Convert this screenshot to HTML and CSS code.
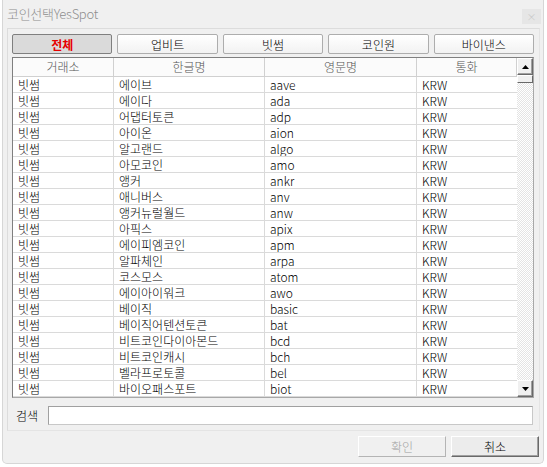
FILE: index.html
```html
<!DOCTYPE html>
<html lang="ko">
<head>
<meta charset="utf-8">
<link rel="stylesheet" href="styles.css">
</head>
<body>
<div class="window">
  <div class="titlebar">
    <span class="title">코인선택YesSpot</span>
    <span class="close">×</span>
  </div>
  <div class="panel">
    <div class="tabs">
      <button class="tab active">전체</button>
      <button class="tab">업비트</button>
      <button class="tab">빗썸</button>
      <button class="tab">코인원</button>
      <button class="tab">바이낸스</button>
    </div>
    <div class="list">
      <div class="list-body">
        <div class="row head">
          <div class="c c1">거래소</div><div class="c c2">한글명</div><div class="c c3">영문명</div><div class="c c4">통화</div>
        </div>
        <div class="row"><div class="c c1">빗썸</div><div class="c c2">에이브</div><div class="c c3">aave</div><div class="c c4">KRW</div></div>
        <div class="row"><div class="c c1">빗썸</div><div class="c c2">에이다</div><div class="c c3">ada</div><div class="c c4">KRW</div></div>
        <div class="row"><div class="c c1">빗썸</div><div class="c c2">어댑터토큰</div><div class="c c3">adp</div><div class="c c4">KRW</div></div>
        <div class="row"><div class="c c1">빗썸</div><div class="c c2">아이온</div><div class="c c3">aion</div><div class="c c4">KRW</div></div>
        <div class="row"><div class="c c1">빗썸</div><div class="c c2">알고랜드</div><div class="c c3">algo</div><div class="c c4">KRW</div></div>
        <div class="row"><div class="c c1">빗썸</div><div class="c c2">아모코인</div><div class="c c3">amo</div><div class="c c4">KRW</div></div>
        <div class="row"><div class="c c1">빗썸</div><div class="c c2">앵커</div><div class="c c3">ankr</div><div class="c c4">KRW</div></div>
        <div class="row"><div class="c c1">빗썸</div><div class="c c2">애니버스</div><div class="c c3">anv</div><div class="c c4">KRW</div></div>
        <div class="row"><div class="c c1">빗썸</div><div class="c c2">앵커뉴럴월드</div><div class="c c3">anw</div><div class="c c4">KRW</div></div>
        <div class="row"><div class="c c1">빗썸</div><div class="c c2">아픽스</div><div class="c c3">apix</div><div class="c c4">KRW</div></div>
        <div class="row"><div class="c c1">빗썸</div><div class="c c2">에이피엠코인</div><div class="c c3">apm</div><div class="c c4">KRW</div></div>
        <div class="row"><div class="c c1">빗썸</div><div class="c c2">알파체인</div><div class="c c3">arpa</div><div class="c c4">KRW</div></div>
        <div class="row"><div class="c c1">빗썸</div><div class="c c2">코스모스</div><div class="c c3">atom</div><div class="c c4">KRW</div></div>
        <div class="row"><div class="c c1">빗썸</div><div class="c c2">에이아이워크</div><div class="c c3">awo</div><div class="c c4">KRW</div></div>
        <div class="row"><div class="c c1">빗썸</div><div class="c c2">베이직</div><div class="c c3">basic</div><div class="c c4">KRW</div></div>
        <div class="row"><div class="c c1">빗썸</div><div class="c c2">베이직어텐션토큰</div><div class="c c3">bat</div><div class="c c4">KRW</div></div>
        <div class="row"><div class="c c1">빗썸</div><div class="c c2">비트코인다이아몬드</div><div class="c c3">bcd</div><div class="c c4">KRW</div></div>
        <div class="row"><div class="c c1">빗썸</div><div class="c c2">비트코인캐시</div><div class="c c3">bch</div><div class="c c4">KRW</div></div>
        <div class="row"><div class="c c1">빗썸</div><div class="c c2">벨라프로토콜</div><div class="c c3">bel</div><div class="c c4">KRW</div></div>
        <div class="row"><div class="c c1">빗썸</div><div class="c c2">바이오패스포트</div><div class="c c3">biot</div><div class="c c4">KRW</div></div>
      </div>
      <div class="scrollbar">
        <div class="sb-btn"><svg width="7" height="4" viewBox="0 0 7 4"><path d="M3.5 0L7 4H0z" fill="#000"/></svg></div>
        <div class="sb-thumb"></div>
        <div class="sb-track"></div>
        <div class="sb-btn"><svg width="7" height="4" viewBox="0 0 7 4"><path d="M0 0H7L3.5 4z" fill="#000"/></svg></div>
      </div>
    </div>
    <div class="search">
      <span class="search-label">검색</span>
      <div class="search-input"></div>
    </div>
  </div>
  <div class="footer">
    <button class="btn disabled">확인</button>
    <button class="btn">취소</button>
  </div>
</div>
</body>
</html>
```

FILE: styles.css
```css
html, body {
  margin: 0;
  padding: 0;
  background: #ffffff;
}
body {
  width: 547px;
  height: 467px;
  font-family: "Noto Sans CJK KR", "Noto Sans", sans-serif;
  font-size: 12px;
  font-weight: 300;
  color: #000;
}
.window {
  margin-left: 2px;
  width: 542px;
  height: 464px;
  box-sizing: border-box;
  border: 1px solid #d6d6d6;
  border-top: none;
  border-radius: 0 0 5px 5px;
  background: #f0f0f0;
  display: flex;
  flex-direction: column;
}
.titlebar {
  height: 28px;
  display: flex;
  align-items: center;
  justify-content: space-between;
  padding: 0 2px 2px 4px;
  box-sizing: border-box;
}
.title {
  color: #8e8e8e;
  font-size: 13px;
  letter-spacing: -0.3px;
}
.close {
  width: 19px;
  height: 15px;
  background: #e6e6e6;
  color: #c4c4c4;
  font-size: 10px;
  line-height: 15px;
  text-align: center;
  margin-top: 6px;
}
.panel {
  margin-left: 4px;
  width: 533px;
  height: 403px;
  box-sizing: border-box;
  border: 1px solid #dcdcdc;
  border-right-color: #e4e4e4;
  border-bottom-color: #e4e4e4;
  padding: 5px 5px 0 4px;
  display: flex;
  flex-direction: column;
}
.tabs {
  display: flex;
  gap: 5px;
  height: 20px;
}
.tab {
  flex: 1;
  margin: 0;
  padding: 0;
  height: 20px;
  box-sizing: border-box;
  border: 1px solid #adadad;
  border-radius: 2px;
  background: linear-gradient(#ffffff, #f2f2f2);
  font-family: inherit;
  font-size: 12px;
  font-weight: 300;
  color: #000;
  line-height: 17px;
}
.tab.active {
  background: #dadada;
  border-color: #7f7f7f;
  color: #e60000;
  font-weight: bold;
}
.list {
  margin-top: 3px;
  width: 522px;
  height: 341px;
  box-sizing: border-box;
  border: 1px solid #7f7f7f;
  border-right-color: #a8a8a8;
  border-bottom-color: #a8a8a8;
  background: #fff;
  display: flex;
}
.list-body {
  width: 504px;
  display: flex;
  flex-direction: column;
}
.row {
  display: flex;
  height: 16px;
  box-sizing: border-box;
  border-bottom: 1px solid #dadada;
}
.row.head {
  height: 19px;
  background: #fbfbfb;
  border-bottom: 1px solid #d0d0d0;
  color: #555;
}
.c {
  box-sizing: border-box;
  border-right: 1px solid #dadada;
  padding-left: 5px;
  line-height: 15px;
  white-space: nowrap;
  overflow: hidden;
}
.head .c {
  text-align: center;
  padding-left: 0;
  line-height: 18px;
  border-right-color: #d0d0d0;
}
.c1 { width: 101px; }
.c2 { width: 151px; }
.c3 { width: 152px; }
.c4 { width: 100px; border-right: none; }
.head .c4 { border-right: 1px solid #d0d0d0; }
.scrollbar {
  width: 16px;
  display: flex;
  flex-direction: column;
}
.sb-btn {
  height: 17px;
  box-sizing: border-box;
  background: #f0f0f0;
  border: 1px solid;
  border-color: #ffffff #696969 #696969 #ffffff;
  box-shadow: inset -1px -1px 0 #a0a0a0;
  display: flex;
  align-items: center;
  justify-content: center;
}
.sb-thumb {
  height: 8px;
  box-sizing: border-box;
  background: #f0f0f0;
  border: 1px solid;
  border-color: #ffffff #696969 #696969 #ffffff;
}
.sb-track {
  flex: 1;
  background-color: #ffffff;
  background-image: repeating-conic-gradient(#e4e4e4 0 25%, #ffffff 0 50%);
  background-size: 2px 2px;
}
.search {
  display: flex;
  align-items: center;
  margin-top: 8px;
  height: 19px;
}
.search-label {
  width: 36px;
  padding-left: 4px;
  box-sizing: border-box;
  font-size: 12px;
}
.search-input {
  width: 485px;
  height: 19px;
  box-sizing: border-box;
  border: 1px solid #a0a0a0;
  border-right-color: #c8c8c8;
  border-bottom-color: #c8c8c8;
  background: #fff;
}
.footer {
  display: flex;
  justify-content: flex-end;
  gap: 5px;
  padding: 5px 4px 0 0;
}
.btn {
  width: 88px;
  height: 21px;
  margin: 0;
  padding: 0;
  box-sizing: border-box;
  border: 1px solid;
  border-color: #ffffff #696969 #696969 #ffffff;
  box-shadow: inset -1px -1px 0 #a0a0a0;
  background: #ececec;
  font-family: inherit;
  font-size: 12px;
  font-weight: 300;
  color: #000;
  line-height: 18px;
}
.btn.disabled {
  color: #a0a0a0;
  border-color: #ffffff #b4b4b4 #b4b4b4 #ffffff;
  box-shadow: none;
  background: #f0f0f0;
}
```
